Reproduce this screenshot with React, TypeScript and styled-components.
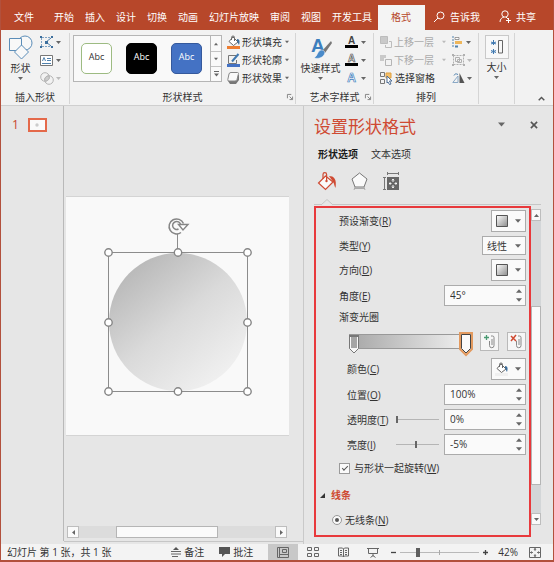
import React from "react";
import styled, { createGlobalStyle, css } from "styled-components";

const Global = createGlobalStyle`
  *, *::before, *::after { box-sizing: border-box; }
  body { margin: 0; }
  body, button, input, select {
    font-family: "Open Sans", "Noto Sans CJK SC", sans-serif;
    font-size: 10px;
    line-height: 14px;
    color: #333;
  }
  button, input, select { margin: 0; padding: 0; border: 0; background: none; border-radius: 0; }
  button { white-space: nowrap; }
  svg { flex: none; overflow: visible; }
`;

/* ---------- page ---------- */
const Page = styled.div`
  display: flex;
  flex-direction: column;
  min-height: 100vh;
  background: #e6e6e6;
  border: 1px solid #b2503c;
  border-width: 0 1px 2px;
  white-space: nowrap;
`;

/* ---------- tab strip ---------- */
const TabStrip = styled.header`
  display: flex;
  align-items: flex-end;
  height: 30px;
  padding-left: 13px;
  background: #b7472a;
`;
const Tabs = styled.nav`
  display: flex;
  gap: 11px;
  padding-left: 20px;
`;
const Tab = styled.button<{ $active?: boolean }>`
  display: flex;
  align-items: center;
  gap: 5px;
  height: 25px;
  padding-bottom: 2px;
  color: #fff;
  ${(p) =>
    p.$active &&
    css`
      margin-left: 6px;
      padding: 0 14px 2px 13px;
      background: #f4f4f4;
      color: #b7472a;
    `}
`;
const Assist = styled.div`
  display: flex;
  gap: 19px;
  padding-left: 8px;
`;

/* ---------- ribbon ---------- */
const Ribbon = styled.section`
  display: flex;
  height: 76px;
  padding: 3px 0 1px;
  background: #f2f2f2;
  border-bottom: 1px solid #cfcfcf;
`;
const Group = styled.div<{ $w: number }>`
  display: flex;
  flex-direction: column;
  flex: 0 0 ${(p) => p.$w}px;
  border-right: 1px solid #d5d5d5;
`;
const GroupBody = styled.div`
  display: flex;
  flex: 1;
`;
const GroupFoot = styled.div`
  display: grid;
  grid-template-columns: 8px 1fr 8px;
  align-items: center;
  height: 14px;
  text-align: center;
`;
const RibbonEnd = styled.div`
  display: flex;
  flex: 1;
  justify-content: flex-end;
  align-items: flex-end;
  padding: 0 8px 0 0;
`;
const BigButton = styled.button<{ $w: number }>`
  display: flex;
  flex-direction: column;
  align-items: center;
  width: ${(p) => p.$w}px;
  gap: 1px;
  padding-top: 2px;
`;
const SizeFrame = styled.span`
  display: grid;
  place-items: center;
  width: 24px;
  height: 24px;
  border: 1px solid #c9c9c9;
  background: #f8f8f8;
`;
const Stack = styled.div`
  display: flex;
  flex-direction: column;
  gap: 4px;
  padding-top: 2px;
`;
const ArrangeRow = styled.div`
  display: flex;
  gap: 6px;
  padding-left: 6px;
`;
const Command = styled.button<{ $off?: boolean; $w?: number }>`
  display: flex;
  align-items: center;
  gap: 2px;
  height: 14px;
  width: ${(p) => (p.$w ? p.$w + "px" : "auto")};
  color: ${(p) => (p.$off ? "#ababab" : "#333")};
  svg:last-child:not(:first-child) { margin-left: auto; }
`;
const Gallery = styled.div`
  display: flex;
  height: 47px;
  margin: 2px 5px 0 3px;
  border: 1px solid #b5b5b5;
  background: #f9f9f9;
`;
const Swatches = styled.div`
  display: flex;
  align-items: center;
  gap: 14px;
  padding: 0 8px 0 7px;
`;
const Swatch = styled.button<{ $bg: string; $line: string; $fg: string }>`
  width: 31px;
  height: 31px;
  border: 1px solid ${(p) => p.$line};
  border-radius: 5px;
  background: ${(p) => p.$bg};
  color: ${(p) => p.$fg};
  font-size: 9px;
  padding-bottom: 3px;
`;
const GallerySteps = styled.div`
  display: grid;
  grid-template-rows: repeat(3, 1fr);
  width: 11px;
  border-left: 1px solid #b5b5b5;
`;
const GalleryStep = styled.button`
  display: grid;
  place-items: center;
  & + & { border-top: 1px solid #c4c4c4; }
`;

/* ---------- work area ---------- */
const Work = styled.main`
  display: flex;
  flex: 1;
`;
const Thumbs = styled.aside`
  display: flex;
  align-items: flex-start;
  gap: 9px;
  flex: 0 0 63px;
  margin-bottom: 3px;
  padding: 12px 0 0 11px;
  border-right: 1px solid #b9b9b9;
  color: #c8452d;
  font-size: 12px;
`;
const Thumb = styled.button`
  display: grid;
  place-items: center;
  width: 19px;
  height: 14px;
  border: 2px solid #e4694a;
  background: #fafafa;
`;
const Stage = styled.section`
  display: flex;
  flex-direction: column;
  flex: 1;
  margin-bottom: 2px;
  border-bottom: 1px solid #c6c6c6;
`;
const SlideArea = styled.div`
  display: flex;
  align-items: center;
  flex: 1;
  padding: 0 14px 0 2px;
`;
const Slide = styled.div`
  width: 100%;
  background: #f9f9f9;
  border: 1px solid #d4d4d4;
  border-width: 1px 0;
  svg { display: block; width: 100%; height: auto; }
`;
const HBar = styled.div`
  display: flex;
  height: 12px;
  margin: 0 16px 3px 3px;
  background: #dcdcdc;
`;
const VBar = styled.div`
  display: flex;
  flex-direction: column;
  width: 10px;
  margin: 3px 0 12px;
  background: #d3d6d8;
`;
const Step = styled.button`
  display: grid;
  place-items: center;
  flex: 0 0 12px;
  border: 1px solid #bdbdbd;
  background: #fafafa;
`;
const Track = styled.div<{ $grow: number; $thumb?: boolean }>`
  flex: ${(p) => p.$grow} 1 0;
  ${(p) =>
    p.$thumb &&
    css`
      border: 1px solid #b5b5b5;
      background: #fafafa;
    `}
`;

/* ---------- format pane ---------- */
const Pane = styled.aside`
  display: flex;
  flex-direction: column;
  flex: 0 0 250px;
  padding: 0 12px 7px 10px;
  border-left: 1px solid #c9c9c9;
`;
const PaneTitle = styled.div`
  display: flex;
  align-items: center;
  gap: 25px;
  height: 41px;
  padding-right: 3px;
  button { display: flex; margin-top: -4px; }
`;
const Heading = styled.h2`
  flex: 1;
  margin: 0;
  font-size: 17px;
  font-weight: 400;
  line-height: 24px;
  color: #cf4a32;
`;
const PaneTabs = styled.div`
  display: flex;
  gap: 13px;
  padding-left: 4px;
`;
const PaneTab = styled.button<{ $active?: boolean }>`
  color: ${(p) => (p.$active ? "#1c1c1c" : "#333")};
  font-weight: ${(p) => (p.$active ? 700 : 400)};
`;
const PaneIcons = styled.div`
  display: flex;
  align-items: center;
  gap: 14px;
  height: 37px;
  padding: 3px 0 0 3px;
  button { display: flex; }
`;
const Divider = styled.div`
  height: 7px;
  margin-bottom: 1px;
  padding-left: 6px;
  border-bottom: 1px solid #c6c6c6;
  svg { display: block; position: relative; top: 1px; }
`;
const PaneContent = styled.div`
  display: flex;
  flex: 1;
`;
const Options = styled.form`
  display: flex;
  flex-direction: column;
  flex: 1;
  gap: 4px;
  padding: 2px 3px 6px;
  border: 2px solid #e8393c;
`;
const Field = styled.div<{ $h: number; $indent?: number }>`
  display: flex;
  align-items: center;
  height: ${(p) => p.$h}px;
  padding-left: ${(p) => p.$indent ?? 20}px;
`;
const Label = styled.label`
  flex: 1;
`;
const Picker = styled.button`
  display: flex;
  align-items: center;
  justify-content: flex-end;
  gap: 7px;
  width: 35px;
  height: 22px;
  padding-right: 4px;
  border: 1px solid #ababab;
  background: #fafafa;
`;
const SelectBox = styled.div`
  display: grid;
  align-items: center;
  width: 44px;
  height: 19px;
  border: 1px solid #ababab;
  background: #fafafa;
  & > * { grid-area: 1 / 1; }
  svg { justify-self: end; margin-right: 4px; pointer-events: none; }
  select { appearance: none; width: 100%; height: 17px; padding-left: 4px; outline: 0; }
`;
const Spin = styled.div`
  display: flex;
  width: 82px;
  height: 21px;
  border: 1px solid #ababab;
  background: #fafafa;
  input { flex: 1; min-width: 0; padding: 0 0 1px 5px; outline: 0; }
`;
const SpinSteps = styled.div`
  display: grid;
  grid-template-rows: 1fr 1fr;
  width: 13px;
  button { display: grid; place-items: center; }
`;
const Range = styled.input`
  appearance: none;
  width: 43px;
  height: 12px;
  margin-right: 5px;
  background: linear-gradient(#b5b5b5, #b5b5b5) center / 100% 1px no-repeat;
  &::-webkit-slider-thumb {
    appearance: none;
    width: 2px;
    height: 7px;
    background: #666;
  }
`;
const GradientRow = styled.div`
  display: flex;
  align-items: center;
  gap: 8px;
  height: 26px;
  padding-left: 30px;
`;
const GradientBar = styled.div`
  display: flex;
  justify-content: space-between;
  flex: 1;
  height: 15px;
  margin-right: -1px;
  border: 1px solid #999;
  border-width: 1px 0;
  background: linear-gradient(90deg, #a6a6a6, #f4f4f4);
`;
const Stop = styled.button`
  display: block;
  height: 24px;
  margin-top: -3px;
  svg { display: block; }
`;
const IconButton = styled.button`
  display: grid;
  place-items: center;
  width: 19px;
  height: 19px;
  border: 1px solid #b9b9b9;
  background: #f6f6f6;
`;
const Check = styled.input`
  appearance: none;
  display: grid;
  place-items: center;
  width: 11px;
  height: 11px;
  margin-right: 4px;
  border: 1px solid #9a9a9a;
  background: #fafafa;
  &:checked::before {
    content: "";
    width: 6px;
    height: 3px;
    margin-top: -2px;
    border: solid #555;
    border-width: 0 0 1px 1px;
    transform: rotate(-45deg);
  }
`;
const Radio = styled.input`
  appearance: none;
  display: grid;
  place-items: center;
  width: 10px;
  height: 10px;
  margin-right: 3px;
  border: 1px solid #999;
  border-radius: 50%;
  background: #fafafa;
  &:checked::before {
    content: "";
    width: 4px;
    height: 4px;
    border-radius: 50%;
    background: #555;
  }
`;
const SectionToggle = styled.button`
  display: flex;
  align-items: center;
  gap: 6px;
  color: #cf4a32;
  font-weight: 700;
`;

/* ---------- status bar ---------- */
const Status = styled.footer`
  display: flex;
  align-items: center;
  height: 16px;
  padding-left: 6px;
  background: #f3f3f3;
`;
const StatusText = styled.span`
  flex: 1;
`;
const StatusButton = styled.button`
  display: flex;
  align-items: center;
  gap: 3px;
  margin-right: 15px;
`;
const View = styled.button<{ $active?: boolean }>`
  display: grid;
  place-items: center;
  width: 30px;
  height: 16px;
  background: ${(p) => (p.$active ? "#c8c8c8" : "none")};
`;
const Zoom = styled.div`
  display: flex;
  align-items: center;
  gap: 4px;
  padding: 0 12px 0 3px;
  button { display: flex; }
`;
const ZoomRange = styled.input`
  appearance: none;
  width: 79px;
  height: 11px;
  background:
    linear-gradient(#aaa, #aaa) center / 1px 5px no-repeat,
    linear-gradient(#b9b9b9, #b9b9b9) center / 100% 1px no-repeat;
  &::-webkit-slider-thumb {
    appearance: none;
    width: 4px;
    height: 9px;
    background: #5e5e5e;
  }
`;
const Percent = styled.output`
  padding: 0 7px 0 6px;
`;

/* ---------- icons ---------- */
type Dir = "down" | "up" | "left" | "right";
const arrowPaths: Record<Dir, string> = {
  down: "M0 1h5L2.500 4z",
  up: "M0 4h5L2.500 1z",
  left: "M4 0v5L1 2.500z",
  right: "M1 0v5L4 2.500z",
};
const Arrow = ({ dir = "down", color = "#666", size = 5 }: { dir?: Dir; color?: string; size?: number }) => (
  <svg width={size} height={size} viewBox="0 0 5 5"><path d={arrowPaths[dir]} fill={color} /></svg>
);
const SearchIcon = () => (
  <svg width="12" height="12" viewBox="0 0 12 12" fill="none" stroke="#fff"><circle cx="7.500" cy="4.500" r="3.500" /><path d="M5 7L1 11" /></svg>
);
const PersonIcon = () => (
  <svg width="12" height="13" viewBox="0 0 12 13" fill="none" stroke="#fff"><circle cx="6" cy="4" r="3.200" /><path d="M1 12c0-3 2-4.500 4-5M7 7l2 2M9.500 8v5M7 10.500h5" /></svg>
);
const ShapesIcon = () => (
  <svg width="24" height="25" viewBox="0 0 24 25" fill="#f8f8f8" stroke="#5b8db8"><circle cx="16" cy="8" r="7" /><path d="M.5 3.500h12v12H.5z" /><path d="M12.500 10l7 7-7 7-7-7z" /></svg>
);
const EditPointsIcon = () => (
  <svg width="13" height="12" viewBox="0 0 13 12" fill="none" stroke="#7fa3c4"><path d="M2 1.500h9M1.500 2v8M2 10.500h9" strokeDasharray="2 1" /><path d="M11 2L6 6l5 4" stroke="#4f81ad" /><path d="M0 0h2v2H0zM11 0h2v2h-2zM0 10h2v2H0zM11 10h2v2h-2zM5 5h3v3H5z" fill="#3c6e9c" stroke="none" /></svg>
);
const TextBoxIcon = () => (
  <svg width="13" height="11" viewBox="0 0 13 11" fill="none" stroke="#777"><path d="M.5.5h12v10H.5z" fill="#fff" /><path d="M2.500 6L4 2.500 5.500 6M7 3.500h4M7 5.500h4M2 8.500h9" stroke="#4f81ad" /></svg>
);
const MergeIcon = () => (
  <svg width="14" height="13" viewBox="0 0 14 13" fill="none" stroke="#b5b5b5"><circle cx="5" cy="5" r="4.300" /><circle cx="9" cy="8" r="4.300" /><path d="M5 9c-1-3 1-5 4-5 1 3-1 5-4 5z" fill="#ccc" /></svg>
);
const FillIcon = ({ bar = "#ed7d31" }: { bar?: string }) => (
  <svg width="13" height="14" viewBox="0 0 13 14" fill="none" stroke="#666"><path d="M6 2l5 5-4.500 3.500L2 6.500z" fill="#fff" /><path d="M4.500 5V2.500a1.500 1.500 0 013 0V6" /><path d="M10 4c3 0 3 3 2 6-1-1-1-3-2-4z" fill="#3c6e9c" stroke="none" /><path d="M0 11h13v3H0z" fill={bar} stroke="none" /></svg>
);
const OutlineIcon = () => (
  <svg width="13" height="14" viewBox="0 0 13 14" fill="none"><path d="M9 2.500H1.500v8h8V7" stroke="#777" /><path d="M5 8.500L11.500 1" stroke="#3f78b0" strokeWidth="2" /><path d="M0 11h13v3H0z" fill="#4472c4" /></svg>
);
const EffectIcon = () => (
  <svg width="13" height="12" viewBox="0 0 13 12"><path d="M4 3h8v5l-3 4H3L1 9z" fill="#777" /><path d="M4 .5h6.500a1 1 0 011 1L10 7.500A2 2 0 018 9H2a1.200 1.200 0 01-1.200-1.500L2 2a2 2 0 012-1.500z" fill="#fafafa" stroke="#888" /></svg>
);
const MoreIcon = () => (
  <svg width="5" height="6" viewBox="0 0 5 6"><path d="M0 0h5v1H0zM0 2.500h5L2.500 5.500z" fill="#666" /></svg>
);
const LauncherIcon = () => (
  <svg width="6" height="6" viewBox="0 0 7 7" fill="none" stroke="#777"><path d="M.5 5V.5H5M3 3l3 3M6.500 3v3.500H3" /></svg>
);
const WordArtIcon = () => (
  <svg width="24" height="25" viewBox="0 0 24 25"><text x="2" y="17" fontFamily="Liberation Sans" fontSize="19" fontWeight="700" fill="#3d7ebd">A</text><path d="M22 6l1 2-7 10-3-2z" fill="#777" /><path d="M12 15c3 0 5 2 3 5-2 3-6 4-10 3 4-2 3-7 7-8z" fill="#4a8ac9" stroke="#fff" strokeWidth=".5" /></svg>
);
const LetterIcon = ({ fill, stroke, bar }: { fill: string; stroke: string; bar?: string }) => (
  <svg width="13" height="14" viewBox="0 0 13 14">{bar && <path d="M0 10h13v3H0z" fill={bar} />}<text x="6.500" y={bar ? 9 : 11} textAnchor="middle" fontFamily="Liberation Sans" fontSize={bar ? 10 : 12} fontWeight="700" fill={fill} stroke={stroke} strokeWidth=".7">A</text></svg>
);
const ForwardIcon = () => (
  <svg width="12" height="12" viewBox="0 0 12 12" fill="none" stroke="#bcbcbc"><path d="M.5.5h7v7h-7z" fill="#c9c9c9" /><path d="M9 5.500h2.500v6h-6V9" /></svg>
);
const BackwardIcon = () => (
  <svg width="12" height="12" viewBox="0 0 12 12" fill="none" stroke="#b5b5b5"><path d="M0 1h6v3H4v3H0z" fill="#c9c9c9" stroke="none" /><path d="M5.500 5.500h6v6h-6z" /></svg>
);
const SelectPaneIcon = () => (
  <svg width="13" height="13" viewBox="0 0 13 13" fill="none" stroke="#777"><path d="M.5.500h4v4h-4zM.5 7.500h4v4h-4z" /><path d="M6 1h5v5H6z" fill="#f4c06b" stroke="#e0a040" /><path d="M7 4l5 5H9.500l1.500 3-1.500.500L8 10l-1 1z" fill="#fff" stroke="#4f6f96" /></svg>
);
const AlignIcon = () => (
  <svg width="11" height="12" viewBox="0 0 11 12"><path d="M1 0v12" stroke="#4f81ad" strokeDasharray="2 1" /><path d="M3 1.500h4v2H3z" fill="#fff" stroke="#777" strokeWidth=".7" /><path d="M3 5h7v3H3z" fill="#eeb65a" /><path d="M3 9.500h3v2H3z" fill="#4f81ad" /></svg>
);
const GroupIcon = () => (
  <svg width="13" height="12" viewBox="0 0 13 12" fill="none" stroke="#b0b0b0"><path d="M1.500 1.500h10v9h-10z" strokeDasharray="2 1" /><path d="M3.500 3.500h4v4h-4zM5.500 5.500h4v3h-4z" /><path d="M0 0h2v2H0zM11 0h2v2h-2zM0 10h2v2H0zM11 10h2v2h-2z" fill="#b0b0b0" stroke="none" /></svg>
);
const RotateIcon = () => (
  <svg width="13" height="10" viewBox="0 0 13 10"><path d="M6 9.500H.8L6 3z" fill="none" stroke="#8aa9c6" /><path d="M7.500 0l5 10h-5z" fill="#555" /><path d="M2 2.500c1-2 2-2 4-1" stroke="#4f81ad" fill="none" /></svg>
);
const SizeIcon = () => (
  <svg width="14" height="14" viewBox="0 0 14 14" fill="none"><path d="M8.500.500h4v12.500h-4z" stroke="#666" /><path d="M3.500 0v5M1 2l5 2M6 2L1 4M3.500 9v5M1 10.500l5 2M6 10.500l-5 2" stroke="#3f78b0" /></svg>
);
const ChevronUp = () => (
  <svg width="7" height="5" viewBox="0 0 7 5" fill="none" stroke="#555" strokeWidth="1.400"><path d="M.7 4.300L3.500 1.400l2.800 2.900" /></svg>
);
const CloseIcon = () => (
  <svg width="8" height="8" viewBox="0 0 9 9" stroke="#555" strokeWidth="1.800"><path d="M1 1l7 7M8 1L1 8" /></svg>
);
const BucketIcon = () => (
  <svg width="20" height="19" viewBox="0 0 20 19" fill="none" stroke="#cf4a32" strokeWidth="1.200"><path d="M8.500 4L16 10l-7.500 7.500L1.500 11z" fill="#fafafa" /><path d="M6 7V2.500a1.800 1.800 0 013.600 0V8" /><circle cx="9.500" cy="9" r="1.200" fill="#cf4a32" stroke="none" /><path d="M12 4c5 0 8 3 6.500 12-1.500-2-1-5-3-7z" fill="#cf4a32" stroke="none" /></svg>
);
const PentagonIcon = () => (
  <svg width="17" height="19" viewBox="0 0 17 19"><path d="M8.500 1L16 7l-3 8H4L1 7z" fill="#fafafa" stroke="#777" /><path d="M4 15l-1 3M13 15l1 3M3.500 16.500h10" stroke="#aaa" fill="none" /></svg>
);
const DimensionsIcon = () => (
  <svg width="18" height="18" viewBox="0 0 18 18" fill="none" stroke="#777"><path d="M5.500 0v3M16.500 0v3M5.500 1.500h11M1 5.500h3M1 17.500h3M2.500 5.500v12" /><path d="M5 5h12v13H5z" fill="#666" stroke="none" /><path d="M11 7v3M11 13v3M7 11.500h2.500M12.500 11.500H15M10 8.500l1-1.500 1 1.500M10 14.500l1 1.500 1-1.500M8.500 10.500l-1.500 1 1.500 1M13.500 10.500l1.500 1-1.500 1" stroke="#fff" strokeWidth=".9" /></svg>
);
const Notch = () => (
  <svg width="14" height="6" viewBox="0 0 14 6"><path d="M1 6l6-5.500L13 6" fill="#e6e6e6" stroke="#c6c6c6" /></svg>
);
const GradientIcon = () => (
  <svg width="12" height="12" viewBox="0 0 12 12"><defs><linearGradient id="chip" x1="0" y1="0" x2="1" y2="1"><stop offset="0" stopColor="#fff" /><stop offset="1" stopColor="#8c8c8c" /></linearGradient></defs><path d="M.5.500h11v11H.5z" fill="url(#chip)" stroke="#555" /></svg>
);
const StartStop = () => (
  <svg width="10" height="21" viewBox="0 0 10 21"><path d="M.5 2.500h9v13L5 20 .5 15.500z" fill="#f8f8f8" stroke="#777" /><path d="M2 4h6v11H2z" fill="#a6a6a6" /><path d="M0 2h10v2H0z" fill="#777" /></svg>
);
const EndStop = () => (
  <svg width="14" height="24" viewBox="0 0 14 24"><path d="M1 1h12v16l-6 6-6-6z" fill="#fff" stroke="#e39a5f" strokeWidth="2" /><path d="M2.500 2.500h9v14L7 21l-4.500-4.500z" fill="#fafafa" stroke="#444" /></svg>
);
const StopIcon = ({ remove }: { remove?: boolean }) => (
  <svg width="12" height="13" viewBox="0 0 12 13" fill="none"><path d="M5.500 6v4.500a2 2 0 004.500 0V2.500a1.500 1.500 0 00-1.500-1.500H7M8 4v6" stroke="#888" />{remove ? <path d="M0 1l5 5M5 0L0 6" stroke="#cf4a32" strokeWidth="1.500" /> : <path d="M2.500 0v5M0 2.500h5" stroke="#4a9a72" strokeWidth="1.300" />}</svg>
);
const SectionArrow = () => (
  <svg width="5" height="5" viewBox="0 0 5 5"><path d="M5 0v5H0z" fill="#333" /></svg>
);
const NotesIcon = () => (
  <svg width="10" height="10" viewBox="0 0 10 10"><path d="M5 0l3 3H2z" fill="#555" /><path d="M0 4.500h10M0 7h10M1 9.500h6" stroke="#666" /></svg>
);
const CommentIcon = () => (
  <svg width="11" height="10" viewBox="0 0 11 10"><path d="M0 0h11v7H6L3 10V7H0z" fill="#555" /></svg>
);
const NormalIcon = () => (
  <svg width="12" height="11" viewBox="0 0 12 11" fill="none" stroke="#666"><path d="M.5.500h11v10H.5zM2.500.500v10M2.500 7.500h9M5.500 2.500h4v3h-4z" /></svg>
);
const SorterIcon = () => (
  <svg width="12" height="11" viewBox="0 0 12 11" fill="none" stroke="#666"><path d="M.5.500h4v3h-4zM7.500.500h4v3h-4zM.5 6.500h4v3h-4zM7.500 6.500h4v3h-4z" /></svg>
);
const ReadingIcon = () => (
  <svg width="11" height="11" viewBox="0 0 11 11" fill="none" stroke="#666"><path d="M.5 1h4l1 1 1-1h4v8h-4l-1 1-1-1h-4zM5.500 2v8M2 3.500h2M2 5.500h2M2 7.500h2M7 3.500h2M7 5.500h2M7 7.500h2" /></svg>
);
const ShowIcon = () => (
  <svg width="12" height="11" viewBox="0 0 12 11" fill="none" stroke="#666"><path d="M0 1.500h12M1.500 1.500v5h9v-5M6 6.500v3M3.500 10.500L6 8.500l2.500 2" /></svg>
);
const FitIcon = () => (
  <svg width="12" height="11" viewBox="0 0 12 11" fill="none" stroke="#666"><path d="M.5.500h11v10H.5z" /><path d="M6 1v3M6 7v3M1 5.500h3M8 5.500h3M5 3l1-1.500L7 3M5 8l1 1.500L7 8M3 4.500l-1.500 1 1.500 1M9 4.500l1.500 1-1.500 1" strokeWidth=".9" /></svg>
);
const Sign = ({ plus }: { plus?: boolean }) => (
  <svg width="5" height="5" viewBox="0 0 5 5" stroke="#444" strokeWidth="1.300"><path d={plus ? "M0 2.500h5M2.500 0v5" : "M0 2.500h5"} /></svg>
);

const handles = [
  [42.5, 55.5], [112, 55.5], [181.5, 55.5],
  [42.5, 125.5], [181.5, 125.5],
  [42.5, 194.5], [112, 194.5], [181.5, 194.5],
];
const SlideDrawing = () => (
  <svg viewBox="0 0 223 238" role="img" aria-label="渐变圆形">
    <defs>
      <linearGradient id="disc" x1=".1" y1=".1" x2=".8" y2=".95">
        <stop offset="0" stopColor="#b6b6b6" />
        <stop offset=".5" stopColor="#dadada" />
        <stop offset="1" stopColor="#f1f1f1" />
      </linearGradient>
    </defs>
    <circle cx="112" cy="125" r="69" fill="url(#disc)" />
    <path d="M42.500 55.500h139v139h-139zM111.500 55V37" fill="none" stroke="#8c8c8c" />
    {handles.map(([x, y]) => (
      <circle key={x + "-" + y} cx={x} cy={y} r="3.700" fill="#fff" stroke="#858585" strokeWidth="1.400" />
    ))}
    <g fill="none" stroke="#858585">
      <path d="M115 35.500a7.500 7.500 0 112.500-9" strokeWidth="1.500" />
      <path d="M112.500 32a4 4 0 112-4.500" strokeWidth="1.500" />
      <path d="M112.500 27.500h9.500l-5 5.500z" fill="#fff" strokeWidth="1.400" />
    </g>
  </svg>
);

/* ---------- composed controls ---------- */
const K = ({ text, k }: { text: string; k: string }) => (
  <>{text}(<u>{k}</u>)</>
);
const Foot = ({ title, launcher }: { title: string; launcher?: boolean }) => (
  <GroupFoot><span />{title}{launcher && <LauncherIcon />}</GroupFoot>
);
const SpinBox = ({ id, value }: { id: string; value: string }) => (
  <Spin>
    <input id={id} defaultValue={value} />
    <SpinSteps>
      <button type="button" aria-label="增加"><Arrow dir="up" size={6} /></button>
      <button type="button" aria-label="减少"><Arrow size={6} /></button>
    </SpinSteps>
  </Spin>
);

const menu = ["开始", "插入", "设计", "切换", "动画", "幻灯片放映", "审阅", "视图", "开发工具"];

export default function App() {
  return (
    <Page>
      <Global />
      <TabStrip>
        <Tab>文件</Tab>
        <Tabs>{menu.map((m) => <Tab key={m}>{m}</Tab>)}</Tabs>
        <Tab $active>格式</Tab>
        <Assist>
          <Tab><SearchIcon />告诉我</Tab>
          <Tab><PersonIcon />共享</Tab>
        </Assist>
      </TabStrip>

      <Ribbon>
        <Group $w={69}>
          <GroupBody>
            <BigButton $w={39}><ShapesIcon /><span>形状</span><Arrow /></BigButton>
            <Stack>
              <Command $w={21} aria-label="编辑形状"><EditPointsIcon /><Arrow /></Command>
              <Command $w={21} aria-label="文本框"><TextBoxIcon /><Arrow /></Command>
              <Command $w={21} aria-label="合并形状"><MergeIcon /><Arrow color="#bbb" /></Command>
            </Stack>
          </GroupBody>
          <Foot title="插入形状" />
        </Group>
        <Group $w={226}>
          <GroupBody>
            <Gallery>
              <Swatches>
                <Swatch $bg="#fff" $line="#9dbb82" $fg="#333">Abc</Swatch>
                <Swatch $bg="#000" $line="#000" $fg="#fff">Abc</Swatch>
                <Swatch $bg="#4472c4" $line="#35599c" $fg="#fff">Abc</Swatch>
              </Swatches>
              <GallerySteps>
                <GalleryStep aria-label="上一行"><Arrow dir="up" size={4} /></GalleryStep>
                <GalleryStep aria-label="下一行"><Arrow size={4} /></GalleryStep>
                <GalleryStep aria-label="其他"><MoreIcon /></GalleryStep>
              </GallerySteps>
            </Gallery>
            <Stack>
              <Command $w={62}><FillIcon />形状填充<Arrow size={4} /></Command>
              <Command $w={62}><OutlineIcon />形状轮廓<Arrow size={4} /></Command>
              <Command $w={62}><EffectIcon />形状效果<Arrow size={4} /></Command>
            </Stack>
          </GroupBody>
          <Foot title="形状样式" launcher />
        </Group>
        <Group $w={78}>
          <GroupBody>
            <BigButton $w={49}><WordArtIcon /><span>快速样式</span><Arrow /></BigButton>
            <Stack>
              <Command $w={21} aria-label="文本填充"><LetterIcon fill="#444" stroke="none" bar="#000" /><Arrow /></Command>
              <Command $w={21} aria-label="文本轮廓"><LetterIcon fill="#fff" stroke="#555" bar="#000" /><Arrow /></Command>
              <Command $w={21} aria-label="文本效果"><LetterIcon fill="#fff" stroke="#3d7ebd" /><Arrow /></Command>
            </Stack>
          </GroupBody>
          <Foot title="艺术字样式" launcher />
        </Group>
        <Group $w={105}>
          <GroupBody>
            <Stack>
              <ArrangeRow><Command $off $w={66}><ForwardIcon />上移一层<Arrow size={4} color="#bbb" /></Command><Command $w={19} aria-label="对齐"><AlignIcon /><Arrow /></Command></ArrangeRow>
              <ArrangeRow><Command $off $w={66}><BackwardIcon />下移一层<Arrow size={4} color="#bbb" /></Command><Command $w={19} aria-label="组合"><GroupIcon /><Arrow color="#bbb" /></Command></ArrangeRow>
              <ArrangeRow><Command $w={66}><SelectPaneIcon />选择窗格</Command><Command $w={19} aria-label="旋转"><RotateIcon /><Arrow /></Command></ArrangeRow>
            </Stack>
          </GroupBody>
          <Foot title="排列" />
        </Group>
        <Group $w={35}>
          <BigButton $w={35}><SizeFrame><SizeIcon /></SizeFrame><span>大小</span><Arrow /></BigButton>
        </Group>
        <RibbonEnd><button aria-label="折叠功能区"><ChevronUp /></button></RibbonEnd>
      </Ribbon>

      <Work>
        <Thumbs>1<Thumb aria-label="幻灯片 1"><svg width="4" height="4" viewBox="0 0 4 4"><circle cx="2" cy="2" r="1.700" fill="#ccc" /></svg></Thumb></Thumbs>
        <Stage>
          <SlideArea><Slide><SlideDrawing /></Slide></SlideArea>
          <HBar>
            <Step aria-label="向左"><Arrow dir="left" /></Step>
            <Track $grow={38} />
            <Track $grow={101} $thumb />
            <Track $grow={58} />
            <Step aria-label="向右"><Arrow dir="right" /></Step>
          </HBar>
        </Stage>
        <Pane>
          <PaneTitle>
            <Heading>设置形状格式</Heading>
            <button aria-label="任务窗格选项"><Arrow size={7} /></button>
            <button aria-label="关闭"><CloseIcon /></button>
          </PaneTitle>
          <PaneTabs>
            <PaneTab $active>形状选项</PaneTab>
            <PaneTab>文本选项</PaneTab>
          </PaneTabs>
          <PaneIcons>
            <button aria-label="填充与线条"><BucketIcon /></button>
            <button aria-label="效果"><PentagonIcon /></button>
            <button aria-label="大小与属性"><DimensionsIcon /></button>
          </PaneIcons>
          <Divider><Notch /></Divider>
          <PaneContent>
            <Options>
              <Field $h={22}><Label htmlFor="preset"><K text="预设渐变" k="R" /></Label><Picker id="preset" type="button"><GradientIcon /><Arrow size={6} /></Picker></Field>
              <Field $h={19}>
                <Label htmlFor="kind"><K text="类型" k="Y" /></Label>
                <SelectBox><select id="kind"><option>线性</option></select><Arrow size={6} /></SelectBox>
              </Field>
              <Field $h={22}><Label htmlFor="direction"><K text="方向" k="D" /></Label><Picker id="direction" type="button"><GradientIcon /><Arrow size={6} /></Picker></Field>
              <Field $h={21}><Label htmlFor="angle"><K text="角度" k="E" /></Label><SpinBox id="angle" value="45°" /></Field>
              <Field $h={14}>渐变光圈</Field>
              <GradientRow>
                <GradientBar>
                  <Stop type="button" aria-label="光圈 1"><StartStop /></Stop>
                  <Stop type="button" aria-label="光圈 2"><EndStop /></Stop>
                </GradientBar>
                <IconButton type="button" aria-label="添加渐变光圈"><StopIcon /></IconButton>
                <IconButton type="button" aria-label="删除渐变光圈"><StopIcon remove /></IconButton>
              </GradientRow>
              <Field $h={22} $indent={28}><Label htmlFor="color"><K text="颜色" k="C" /></Label><Picker id="color" type="button"><FillIcon bar="#f0f0f0" /><Arrow size={6} /></Picker></Field>
              <Field $h={21} $indent={28}><Label htmlFor="position"><K text="位置" k="O" /></Label><SpinBox id="position" value="100%" /></Field>
              <Field $h={21} $indent={28}><Label htmlFor="alpha"><K text="透明度" k="T" /></Label><Range type="range" aria-label="透明度" defaultValue={0} /><SpinBox id="alpha" value="0%" /></Field>
              <Field $h={21} $indent={28}><Label htmlFor="light"><K text="亮度" k="I" /></Label><Range type="range" aria-label="亮度" min={-100} max={100} defaultValue={-5} /><SpinBox id="light" value="-5%" /></Field>
              <Field $h={18}><Check id="rotate" type="checkbox" defaultChecked /><Label htmlFor="rotate"><K text="与形状一起旋转" k="W" /></Label></Field>
              <Field $h={28} $indent={1}><SectionToggle type="button"><SectionArrow />线条</SectionToggle></Field>
              <Field $h={14} $indent={13}><Radio id="noline" type="radio" name="line" defaultChecked /><Label htmlFor="noline"><K text="无线条" k="N" /></Label></Field>
            </Options>
            <VBar>
              <Step aria-label="向上"><Arrow dir="up" /></Step>
              <Track $grow={86} />
              <Track $grow={179} $thumb />
              <Track $grow={28} />
              <Step aria-label="向下"><Arrow /></Step>
            </VBar>
          </PaneContent>
        </Pane>
      </Work>

      <Status>
        <StatusText>幻灯片 第 1 张，共 1 张</StatusText>
        <StatusButton><NotesIcon />备注</StatusButton>
        <StatusButton><CommentIcon />批注</StatusButton>
        <View $active aria-label="普通视图"><NormalIcon /></View>
        <View aria-label="幻灯片浏览"><SorterIcon /></View>
        <View aria-label="阅读视图"><ReadingIcon /></View>
        <View aria-label="幻灯片放映"><ShowIcon /></View>
        <Zoom>
          <button aria-label="缩小"><Sign /></button>
          <ZoomRange type="range" aria-label="缩放" min={10} max={190} defaultValue={48} />
          <button aria-label="放大"><Sign plus /></button>
          <Percent>42%</Percent>
          <button aria-label="适应窗口"><FitIcon /></button>
        </Zoom>
      </Status>
    </Page>
  );
}
